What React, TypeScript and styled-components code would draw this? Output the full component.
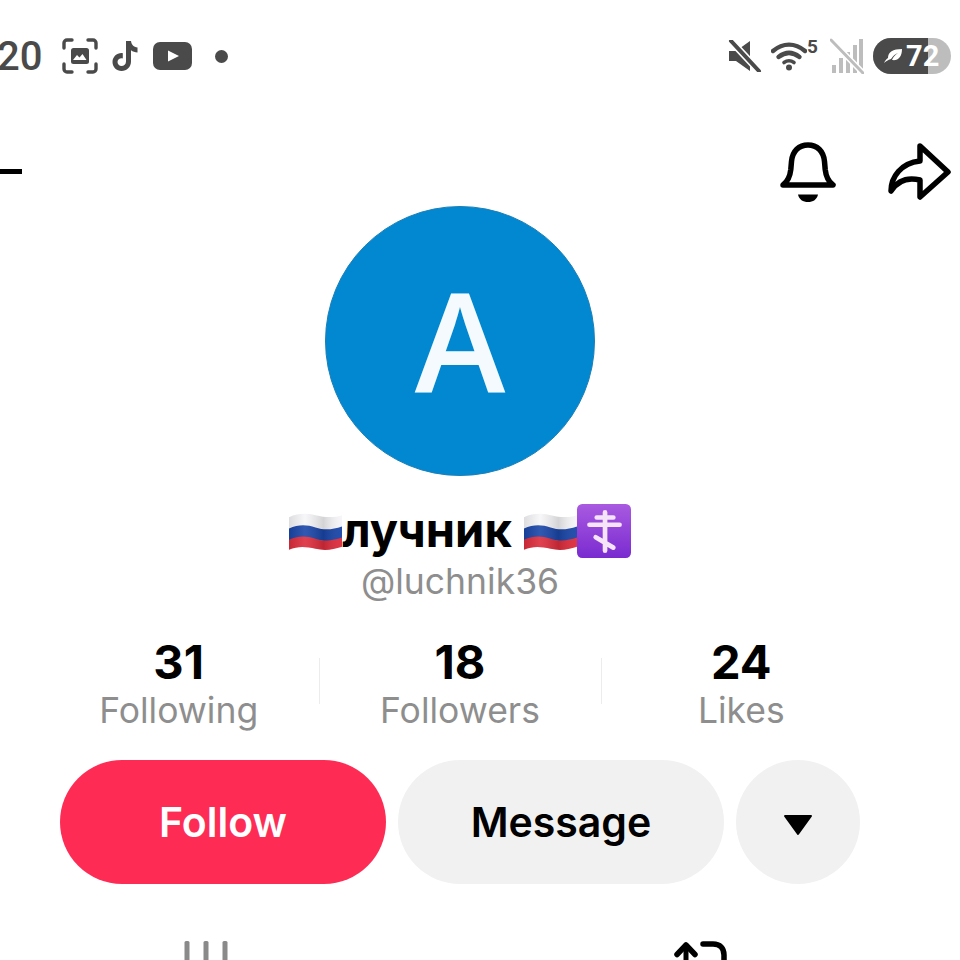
import React from 'react'
import styled, { createGlobalStyle } from 'styled-components'

const GlobalStyle = createGlobalStyle`
  html, body {
    margin: 0;
    padding: 0;
    background: #fff;
  }
  body {
    font-family: Inter, "Liberation Sans", sans-serif;
  }
`

const Flag = () => (
  <FlagSvg viewBox="0 0 52 38">
    <defs>
      <linearGradient id="sheen" x1="0" x2="1" y1="0" y2="0">
        <stop offset="0" stopColor="#000" stopOpacity="0.1" />
        <stop offset="0.3" stopColor="#fff" stopOpacity="0.1" />
        <stop offset="0.65" stopColor="#000" stopOpacity="0.14" />
        <stop offset="1" stopColor="#fff" stopOpacity="0.05" />
      </linearGradient>
    </defs>
    <path d="M0 5C9 1 17 1 26 3s17 3 26 0v13c-9 3-17 3-26 1S9 14 0 18z" fill="#f6f6f8" />
    <path d="M0 16c9-4 17-4 26-1s17 2 26-1v12c-9 3-17 3-26 1S9 24 0 28z" fill="#1a46a8" />
    <path d="M0 27c9-4 17-4 26-1s17 2 26-1v9c-9 3-17 4-26 2S9 33 0 37z" fill="#dd2c3c" />
    <path d="M0 5C9 1 17 1 26 3s17 3 26 0v31c-9 3-17 4-26 2S9 33 0 37z" fill="url(#sheen)" />
  </FlagSvg>
)

const CrossTile = () => (
  <TileSvg viewBox="0 0 52 52">
    <defs>
      <linearGradient id="tile" x1="0" x2="0" y1="0" y2="1">
        <stop offset="0" stopColor="#a95ae0" />
        <stop offset="1" stopColor="#7a2bd0" />
      </linearGradient>
    </defs>
    <rect width="52" height="52" rx="5" fill="url(#tile)" />
    <path
      d="M27 8v37M19 13h16M12 20h29M18 32l17 10"
      stroke="#f5e3f8"
      strokeWidth="4.5"
      strokeLinecap="round"
      fill="none"
    />
  </TileSvg>
)

const Stat = ({ value, label }: { value: string; label: string }) => (
  <StatItem>
    <StatValue>{value}</StatValue>
    <StatLabel>{label}</StatLabel>
  </StatItem>
)

export default function App() {
  return (
    <>
      <GlobalStyle />
      <Page>
        <StatusBar>
          <StatusGroup>
            <Clock>20</Clock>
            <svg width="36" height="36" viewBox="0 0 36 36" fill="none">
              <path
                d="M2 10V5a3 3 0 0 1 3-3h5M26 2h5a3 3 0 0 1 3 3v5M34 26v5a3 3 0 0 1-3 3h-5M10 34H5a3 3 0 0 1-3-3v-5"
                stroke="#4a4a4a"
                strokeWidth="3.4"
                strokeLinecap="round"
              />
              <rect x="9" y="10" width="18" height="16" rx="2.5" fill="#4a4a4a" />
              <path d="M11 22l4-5 2.5 2.5 3-3.5 4 6z" fill="#fff" />
            </svg>
            <TiktokIcon width="28" height="32" viewBox="0 0 28 32">
              <path
                d="M15 1h5c.4 3.6 2.7 6 6.500 6.400v5c-2.500 0-4.700-.8-6.500-2.100v11.200C20 27 15.800 31 10.600 31 5.500 31 1.500 27 1.500 22c0-5.300 4.700-9.500 10.300-8.800v5.200c-2.700-.7-5.300 1-5.300 3.600 0 2.200 1.800 4 4 4 2.400 0 4.500-1.700 4.500-4.500z"
                fill="#4a4a4a"
              />
            </TiktokIcon>
            <YoutubeIcon width="39" height="28" viewBox="0 0 39 28">
              <rect width="39" height="28" rx="7" fill="#4a4a4a" />
              <path d="M15 8.500l11 5.500-11 5.500z" fill="#fff" />
            </YoutubeIcon>
            <Dot />
          </StatusGroup>
          <StatusRight>
            <svg width="34" height="32" viewBox="0 0 34 32">
              <path d="M1 11h7L22 1v30L8 21H1z" fill="#4a4a4a" />
              <path d="M3 1l28 30" stroke="#fff" strokeWidth="7" />
              <path d="M3 1l28 30" stroke="#4a4a4a" strokeWidth="4" strokeLinecap="round" />
            </svg>
            <WifiWrap>
              <svg width="36" height="30" viewBox="0 0 36 30" fill="none">
                <path d="M2 10c10-8.500 22-8.500 32 0" stroke="#4a4a4a" strokeWidth="4.400" strokeLinecap="round" />
                <path d="M7.500 16c7-5.500 14-5.500 21 0" stroke="#4a4a4a" strokeWidth="4.400" strokeLinecap="round" />
                <path d="M13 21.500c3.500-2.500 6.500-2.500 10 0" stroke="#4a4a4a" strokeWidth="3.600" strokeLinecap="round" />
                <circle cx="18" cy="26.500" r="3" fill="#4a4a4a" />
              </svg>
              <WifiBadge>5</WifiBadge>
            </WifiWrap>
            <svg width="34" height="36" viewBox="0 0 34 36" fill="#bdbdbd">
              <rect x="2" y="27" width="4" height="8" />
              <rect x="9" y="20" width="4" height="15" />
              <rect x="16" y="14" width="4" height="21" />
              <rect x="23" y="7" width="4" height="28" />
              <rect x="29" y="1" width="4" height="34" />
              <path d="M1 2l32 33" stroke="#fff" strokeWidth="6" />
              <path d="M1 2l32 33" stroke="#bdbdbd" strokeWidth="3" strokeLinecap="round" />
            </svg>
            <Battery>
              <BatteryFill />
              <BatteryContent>
                <svg width="20" height="16" viewBox="0 0 20 16">
                  <path d="M5 10C5 4 10 1 19 1c0 8-4 12-10 11 1-3 3-5 6-7-3 1-5 3-7 6-3 1-5 2-7 4 1-2 2-4 4-5z" fill="#fff" />
                </svg>
                <BatteryText>72</BatteryText>
              </BatteryContent>
            </Battery>
          </StatusRight>
        </StatusBar>

        <NavBar>
          <BackStub />
          <NavIcons>
            <svg width="58" height="64" viewBox="0 0 58 64" fill="none">
              <path
                d="M4 45c4-3 6.800-6.500 7.800-15.500l.7-8C13.500 11 20 5 29 5s15.500 6 16.500 16.500l.7 8c1 9 3.800 12.500 7.800 15.500z"
                stroke="#000"
                strokeWidth="5.500"
                strokeLinejoin="round"
              />
              <path d="M19 54.500h20c-1 5-5 7.500-10 7.500s-9-2.500-10-7.500z" fill="#000" />
            </svg>
            <svg width="64" height="60" viewBox="0 0 64 60" fill="none">
              <path
                d="M32 4l28 26-28 25V38C20 35 10 38 3 49c0-14 10-28 29-30z"
                stroke="#000"
                strokeWidth="5.500"
                strokeLinejoin="round"
              />
            </svg>
          </NavIcons>
        </NavBar>

        <Content>
          <Avatar>
            <AvatarLetter>A</AvatarLetter>
          </Avatar>

          <NameRow>
            <Flag />
            <Name>лучник</Name>
            <Flag />
            <CrossTile />
          </NameRow>
          <Handle>@luchnik36</Handle>

          <Stats>
            <Stat value="31" label="Following" />
            <Stat value="18" label="Followers" />
            <Stat value="24" label="Likes" />
          </Stats>

          <Actions>
            <PillButton $primary>Follow</PillButton>
            <PillButton>Message</PillButton>
            <RoundButton>
              <svg width="30" height="22" viewBox="0 0 30 22">
                <path d="M2 2h26L15 20z" fill="#000" stroke="#000" strokeWidth="2" strokeLinejoin="round" />
              </svg>
            </RoundButton>
          </Actions>
        </Content>

        <Tabs>
          <svg width="46" height="30" viewBox="0 0 46 30" fill="#8a8a8a">
            <rect x="0.5" y="0" width="5" height="30" rx="1.500" />
            <rect x="19.500" y="0" width="5" height="30" rx="1.500" />
            <rect x="38.500" y="0" width="5" height="30" rx="1.500" />
          </svg>
          <svg width="54" height="30" viewBox="0 0 54 30" fill="none">
            <path d="M13 30V6" stroke="#000" strokeWidth="5" />
            <path d="M4 13.500L13 4l9 9.500" stroke="#000" strokeWidth="5.500" strokeLinejoin="round" strokeLinecap="round" />
            <path d="M30 3h10c7 0 11 4 11 11v16" stroke="#000" strokeWidth="5.500" strokeLinecap="round" />
          </svg>
        </Tabs>
      </Page>
    </>
  )
}

const Page = styled.div`
  width: 960px;
  height: 960px;
  overflow: hidden;
  background: #fff;
  display: flex;
  flex-direction: column;
`
const StatusBar = styled.div`
  box-sizing: border-box;
  height: 36px;
  margin-top: 38px;
  display: flex;
  align-items: center;
  justify-content: space-between;
  padding-right: 9px;
`
const StatusGroup = styled.div`
  display: flex;
  align-items: center;
`
const Clock = styled.span`
  font-family: Roboto, sans-serif;
  font-size: 40px;
  font-weight: 500;
  color: #4a4a4a;
  margin-left: -3px;
  width: 65px;
`
const TiktokIcon = styled.svg`
  margin-left: 13px;
`
const YoutubeIcon = styled.svg`
  margin-left: 14px;
`
const Dot = styled.span`
  width: 13px;
  height: 13px;
  border-radius: 50%;
  background: #4a4a4a;
  margin-left: 23px;
`
const StatusRight = styled.div`
  display: flex;
  align-items: center;
  gap: 9px;
`
const WifiWrap = styled.div`
  position: relative;
  display: flex;
  width: 50px;
`
const WifiBadge = styled.span`
  position: absolute;
  top: -6px;
  right: 3px;
  font-family: Roboto, sans-serif;
  font-size: 19px;
  font-weight: 700;
  color: #4a4a4a;
`
const Battery = styled.div`
  position: relative;
  width: 78px;
  height: 36px;
  border-radius: 18px;
  background: #bdbdbd;
  overflow: hidden;
`
const BatteryFill = styled.div`
  width: 55px;
  height: 100%;
  background: #4a4a4a;
`
const BatteryContent = styled.div`
  position: absolute;
  inset: 0;
  display: flex;
  align-items: center;
  padding-left: 10px;
  gap: 3px;
`
const BatteryText = styled.span`
  font-family: Roboto, sans-serif;
  font-size: 29px;
  font-weight: 700;
  color: #fff;
`
const NavBar = styled.div`
  box-sizing: border-box;
  height: 64px;
  margin-top: 66px;
  display: flex;
  align-items: center;
  justify-content: space-between;
  padding-right: 8px;
`
const BackStub = styled.div`
  width: 22px;
  height: 5px;
  margin-top: -2px;
  background: #000;
`
const NavIcons = styled.div`
  display: flex;
  align-items: center;
  gap: 51px;
`
const Content = styled.div`
  width: 920px;
  display: flex;
  flex-direction: column;
  align-items: center;
`
const Avatar = styled.div`
  width: 270px;
  height: 270px;
  margin-top: 2px;
  box-sizing: border-box;
  border-radius: 50%;
  background: #0288d1;
  border: 1px solid #1a7fb8;
  display: flex;
  align-items: center;
  justify-content: center;
`
const AvatarLetter = styled.span`
  font-family: "Open Sans", sans-serif;
  font-size: 137px;
  font-weight: 600;
  line-height: 1;
  margin-bottom: 4px;
  color: #f4fafd;
`
const NameRow = styled.div`
  display: flex;
  align-items: center;
  height: 54px;
  margin-top: 28px;
`
const FlagSvg = styled.svg`
  width: 53px;
  height: 39px;
  flex: none;
`
const TileSvg = styled.svg`
  width: 54px;
  height: 54px;
  flex: none;
`
const Name = styled.span`
  font-size: 47px;
  font-weight: 700;
  line-height: 54px;
  margin-bottom: 2px;
  color: #000;
  margin-right: 12px;
`
const Handle = styled.div`
  font-size: 35.5px;
  line-height: 42px;
  color: #8e8e8e;
  margin-top: 3px;
`
const Stats = styled.div`
  width: 844px;
  margin-top: 35px;
  display: grid;
  grid-template-columns: repeat(3, 1fr);
`
const StatItem = styled.div`
  display: flex;
  flex-direction: column;
  align-items: center;
  position: relative;
  & + &::before {
    content: '';
    position: absolute;
    left: 0;
    top: 20px;
    width: 1px;
    height: 46px;
    background: #ececec;
  }
`
const StatValue = styled.span`
  font-size: 47px;
  line-height: 48px;
  font-weight: 700;
  color: #000;
`
const StatLabel = styled.span`
  font-size: 35.5px;
  line-height: 50px;
  color: #8e8e8e;
`
const Actions = styled.div`
  width: 800px;
  margin-top: 24px;
  display: flex;
  gap: 12px;
`
const PillButton = styled.button<{ $primary?: boolean }>`
  flex: 1;
  height: 124px;
  border: none;
  border-radius: 62px;
  font-family: inherit;
  font-size: 41px;
  font-weight: 600;
  color: ${({ $primary }) => ($primary ? '#fff' : '#000')};
  background: ${({ $primary }) => ($primary ? '#fe2c55' : '#f1f1f2')};
`
const RoundButton = styled.button`
  width: 124px;
  height: 124px;
  flex: none;
  border: none;
  padding: 5px 0 0;
  border-radius: 50%;
  background: #f1f1f2;
  display: flex;
  align-items: center;
  justify-content: center;
`
const Tabs = styled.div`
  box-sizing: border-box;
  margin-top: 57px;
  padding: 0 233px 0 184px;
  display: flex;
  justify-content: space-between;
`
